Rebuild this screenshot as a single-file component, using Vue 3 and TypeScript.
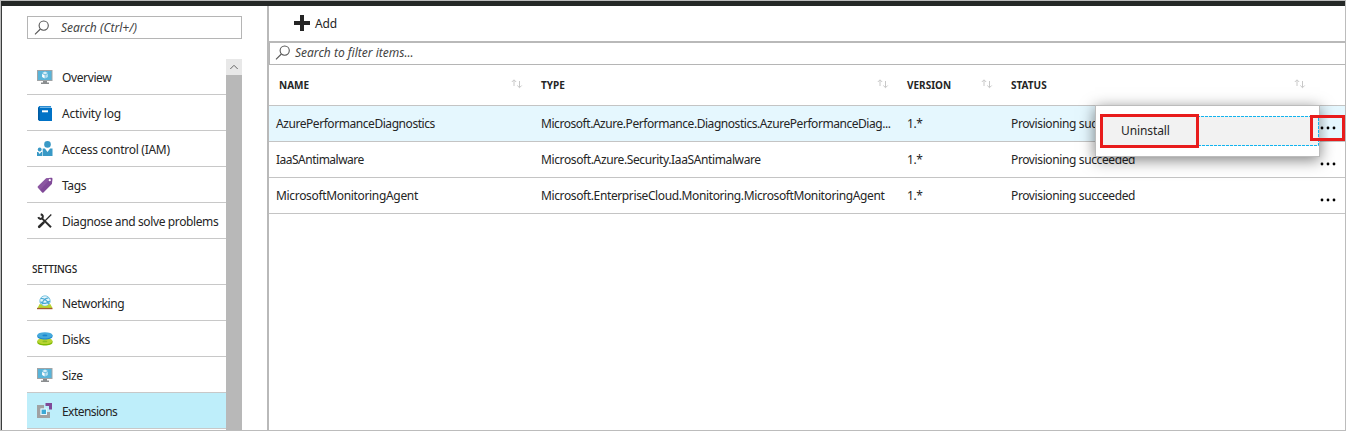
<script setup lang="ts">
interface NavItem {
  label: string
  icon: string
  spacing?: string
}
interface Extension {
  name: string
  type: string
  version: string
  status: string
  spacing: string
}

const general: NavItem[] = [
  { label: 'Overview', icon: 'monitor' },
  { label: 'Activity log', icon: 'book', spacing: '-0.2px' },
  { label: 'Access control (IAM)', icon: 'people', spacing: '-0.28px' },
  { label: 'Tags', icon: 'tag' },
  { label: 'Diagnose and solve problems', icon: 'tools' },
]
const settings: NavItem[] = [
  { label: 'Networking', icon: 'network' },
  { label: 'Disks', icon: 'disks' },
  { label: 'Size', icon: 'monitor' },
  { label: 'Extensions', icon: 'extensions', spacing: '-0.55px' },
]
const sections = [
  { title: '', items: general },
  { title: 'SETTINGS', items: settings },
]
const columns = ['NAME', 'TYPE', 'VERSION', 'STATUS']
const rows: Extension[] = [
  {
    name: 'AzurePerformanceDiagnostics',
    type: 'Microsoft.Azure.Performance.Diagnostics.AzurePerformanceDiag...',
    version: '1.*',
    status: 'Provisioning succeeded',
    spacing: '-0.44px',
  },
  {
    name: 'IaaSAntimalware',
    type: 'Microsoft.Azure.Security.IaaSAntimalware',
    version: '1.*',
    status: 'Provisioning succeeded',
    spacing: '-0.5px',
  },
  {
    name: 'MicrosoftMonitoringAgent',
    type: 'Microsoft.EnterpriseCloud.Monitoring.MicrosoftMonitoringAgent',
    version: '1.*',
    status: 'Provisioning succeeded',
    spacing: '-0.33px',
  },
]
</script>

<template>
  <div class="portal">
    <aside class="sidebar">
      <div class="search side-search">
        <svg class="lens" width="16" height="16" viewBox="0 0 16 16"><circle cx="9.7" cy="5.6" r="4.6" /><path d="M6.4 9 1 14.4" /></svg>
        <span>Search (Ctrl+/)</span>
      </div>
      <div class="nav-area">
        <nav>
          <section v-for="s in sections" :key="s.title">
            <h2 v-if="s.title">{{ s.title }}</h2>
            <div v-for="item in s.items" :key="item.label" class="nav-item" :class="{ active: item.label === 'Extensions' }">
              <svg class="icon" width="16" height="16" viewBox="0 0 16 16">
                <g v-if="item.icon === 'monitor'">
                  <path fill="#a0a4a6" d="M0 1h15.500v11H0z" />
                  <path fill="#59b4d9" d="M1 2h13.500v9H1z" />
                  <path fill="#8a8d8f" d="M6 12h4v1.600h2v1.300H4v-1.300h2z" />
                  <path fill="#d5edf7" d="m8 2.600 2.800 1.500L8 5.600 5.200 4.100z" />
                  <path fill="#fff" d="m5.100 4.800 2.600 1.400v3.300L5.100 8z" />
                  <path fill="#b5def0" d="m10.900 4.800-2.600 1.400v3.300L10.900 8z" />
                </g>
                <g v-else-if="item.icon === 'book'">
                  <path fill="#0072c6" d="M2.400 1H14v1H3v1h12v13H2.300L1 14.600V2.400z" />
                  <path fill="#6fb5e4" d="M3 1.600h11.200V3H3z" />
                  <path fill="#005ba1" d="M1 2.500 2.600 4v12L1 14.600z" />
                  <path fill="#fff" d="M5 5.300h6v2H5z" />
                </g>
                <g v-else-if="item.icon === 'people'" fill="#3999c6">
                  <circle cx="10.5" cy="3.400" r="3.300" />
                  <path d="M5.700 15V7.500h2.200l2.600 3.600 2.600-3.600h2.400V15z" />
                  <circle cx="2.700" cy="8.500" r="1.900" />
                  <path d="M0 15v-4h1.200l1.500 2 1.500-2h1V15z" />
                </g>
                <g v-else-if="item.icon === 'tag'">
                  <path fill="#804998" d="M9.200 1.200 14.400.7q1.200 0 1.100 1.200l-.6 5.200-8.400 8.300q-.7.6-1.400 0L1 10.800q-.8-.8 0-1.500z" />
                  <path fill="#9a6bae" d="M9.200 1.200 14.400.7 3.200 13 1 10.800q-.8-.8 0-1.500z" opacity=".4" />
                  <circle cx="12.8" cy="3.2" r="1.1" fill="#fff" />
                </g>
                <g v-else-if="item.icon === 'tools'" fill="none" stroke="#2b2b2b">
                  <path stroke-width="2" d="m5 5.400 9 8.800" />
                  <path stroke-width="2.6" stroke-linecap="round" d="m2.200 13.800 4.300-4.200" />
                  <path stroke-width="1.3" d="m6.500 9.400 7.800-7.900" />
                  <path stroke-width="2" d="M3.700 1.300c2.200.6 2.800 2.400 1.500 3.800S2 5.900 1.300 4.100" />
                </g>
                <g v-else-if="item.icon === 'network'">
                  <circle cx="8" cy="6" r="5.2" fill="#e6f5fb" stroke="#7cc6e3" />
                  <path fill="none" stroke="#49a9d3" stroke-width="1.2" d="M4 3.400c3 0 7 2.200 7.600 6M5 9.500c.2-3 2.600-6.400 6.600-6.600M3.400 6.800c3 2.500 7 1.800 9.400-.8" />
                  <path fill="#b8d432" d="M2.700 9Q5 9 5.500 10.500q2.500 1 5 0Q11 9 13.300 9l2.200 4H.5z" />
                  <path fill="#a4582c" d="M0 12.900h15.500v1.300H0z" />
                </g>
                <g v-else-if="item.icon === 'disks'">
                  <path fill="#7fba00" d="M.3 10v1.500C.3 13.300 4 14.600 7.900 14.600s7.600-1.300 7.600-3.100V10z" />
                  <ellipse cx="7.900" cy="10" rx="7.600" ry="3.100" fill="#b8d432" />
                  <ellipse cx="7.900" cy="10.400" rx="2.500" ry=".9" fill="#8cc020" />
                  <path fill="#1b85cc" d="M.3 4.300v1.200C.3 7.300 4 8.500 7.900 8.500s7.600-1.200 7.600-3V4.300z" />
                  <ellipse cx="7.900" cy="4.300" rx="7.600" ry="3.100" fill="#45a9dc" />
                  <ellipse cx="7.900" cy="4.400" rx="2.500" ry=".9" fill="#1b85cc" />
                </g>
                <g v-else>
                  <path fill="#a0a1a2" d="M0 2h7v3.500H3.500v6.500h6.500V9h3v6H0z" />
                  <path fill="#e8f7fc" d="M3.500 5.500H10V12H3.500z" />
                  <path fill="#3ba9d6" d="M4.600 6.600H9v4.400H4.600z" />
                  <path fill="#804998" d="M8.500 0H15v6.500h-3V3H8.500z" />
                </g>
              </svg>
              <span :style="{ letterSpacing: item.spacing }">{{ item.label }}</span>
            </div>
          </section>
        </nav>
        <div class="scrollbar">
          <svg width="16" height="16" viewBox="0 0 16 16"><path d="m4.300 10 3.700-3.700L11.700 10" /></svg>
        </div>
      </div>
    </aside>

    <main>
      <div class="toolbar">
        <svg width="16" height="16" viewBox="0 0 16 16"><path fill="#252525" d="M6 0h4v6h6v4h-6v6H6v-6H0V6h6z" /></svg>
        <span>Add</span>
      </div>
      <div class="search filter">
        <svg class="lens" width="16" height="16" viewBox="0 0 16 16"><circle cx="9.7" cy="5.6" r="4.6" /><path d="M6.400 9 1 14.400" /></svg>
        <span>Search to filter items...</span>
      </div>
      <div class="grid head">
        <div v-for="c in columns" :key="c" class="th">
          <span>{{ c }}</span>
          <svg width="12" height="10" viewBox="0 0 12 10"><path d="M3 7V1M.8 3 3 .8 5.200 3M8.500 2v6.500M6.300 6.500l2.200 2.200 2.200-2.200" /></svg>
        </div>
      </div>
      <div v-for="(r, i) in rows" :key="r.name" class="grid row" :class="{ selected: i === 0 }">
        <span class="c-name" :style="{ letterSpacing: r.spacing }">{{ r.name }}</span>
        <span :class="{ clipped: i === 0 }">{{ r.type }}</span>
        <span>{{ r.version }}</span>
        <span>{{ r.status }}</span>
        <svg class="more" width="16" height="4" viewBox="0 0 16 4"><circle cx="2" cy="2" r="1.400" /><circle cx="8" cy="2" r="1.400" /><circle cx="14" cy="2" r="1.400" /></svg>
      </div>
    </main>

    <div class="menu">
      <div class="menu-item">
        <span>Uninstall</span>
        <svg class="focus" width="218" height="30" viewBox="0 0 218 30"><path d="M0 .5h217.500v29H0" /></svg>
      </div>
    </div>
    <div class="mark mark-item"></div>
    <div class="mark mark-more">
      <svg class="edge" width="1" height="20" viewBox="0 0 1 20"><path d="M.5 0v20" /></svg>
      <svg width="16" height="4" viewBox="0 0 16 4"><circle cx="2" cy="2" r="1.400" /><circle cx="8" cy="2" r="1.400" /><circle cx="14" cy="2" r="1.400" /></svg>
    </div>
  </div>
</template>

<style>
body {
  margin: 0;
  overflow: hidden;
}
</style>

<style scoped>
* {
  box-sizing: border-box;
}
svg {
  flex: none;
}
.portal {
  position: relative;
  display: flex;
  width: 1346px;
  height: 431px;
  overflow: hidden;
  border: 1px solid #bcbcbc;
  background: linear-gradient(#252827 5px, transparent 5px), linear-gradient(90deg, #3a3c3c 1px, #fff 1px);
  color: #252525;
  font-family: 'Noto Sans', 'Open Sans', sans-serif;
  font-size: 12px;
  line-height: 16px;
  white-space: nowrap;
}
.sidebar {
  width: 266px;
  padding: 15px 0 0 26px;
}
.search {
  display: flex;
  align-items: center;
  font-style: italic;
  color: #444;
  border: 1px solid #b5b5b5;
}
.lens {
  fill: none;
  stroke: #555;
  stroke-width: 1.1;
}
.side-search {
  width: 215px;
  height: 23px;
  padding-left: 6px;
  gap: 11px;
}
.nav-area {
  display: flex;
  width: 215px;
  height: 371px;
  margin-top: 20px;
}
nav {
  width: 199px;
}
.nav-item {
  display: flex;
  align-items: center;
  height: 36px;
  padding-left: 10px;
  gap: 9px;
  border-bottom: 1px solid #c8c8c8;
  letter-spacing: -0.38px;
}
.nav-item span {
  padding-top: 2px;
}
.active {
  background: #beeefa;
}
h2 {
  height: 46px;
  margin: 0;
  padding: 22px 0 0 5px;
  border-bottom: 1px solid #c8c8c8;
  font-size: 10px;
  font-weight: 500;
  line-height: 16px;
  letter-spacing: -0.2px;
}
.scrollbar {
  width: 16px;
  height: 371px;
  background: linear-gradient(#e8e8e8 16px, #b8b8b8 16px);
}
.scrollbar path {
  fill: none;
  stroke: #666;
}
main {
  width: 1078px;
  height: 424px;
  margin-top: 5px;
  border-left: 2px solid #b9b9b9;
}
.toolbar {
  display: flex;
  align-items: center;
  height: 37px;
  padding: 0 0 1px 25px;
  gap: 5px;
  border-bottom: 2px solid #b9b9b9;
}
.toolbar span {
  padding-top: 1px;
  letter-spacing: -0.1px;
}
.filter {
  height: 22px;
  padding: 0 0 1px 5px;
  gap: 4px;
  border-width: 0 0 1px 1px;
}
.grid {
  display: grid;
  grid-template-columns: 272px 366px 104px 310px 1fr;
  height: 36px;
  align-items: center;
  border-bottom: 1px solid #c4c4c4;
}
.head {
  height: 41px;
  font-size: 10px;
  font-weight: 700;
}
.th {
  display: flex;
  justify-content: space-between;
  align-items: center;
  padding-right: 18px;
}
.th:nth-child(4) {
  padding-right: 15px;
}
.th:first-child {
  padding-left: 10px;
}
.th svg {
  fill: none;
  stroke: #c8c8c8;
  margin-bottom: 3px;
}
.row {
  letter-spacing: -0.38px;
}
.selected {
  background: #e5f7fe;
}
.clipped {
  letter-spacing: -0.45px;
}
.c-name {
  padding-left: 7px;
}
.more {
  margin: 9px 0 0 -1px;
}
.menu {
  position: absolute;
  left: 1094px;
  top: 104px;
  width: 225px;
  height: 52px;
  padding: 10px 0 0 5px;
  border: 1px solid #bcbcbc;
  background: #fff;
  box-shadow: 0 3px 14px rgba(0, 0, 0, 0.5);
}
.menu-item {
  position: relative;
  height: 30px;
  padding-left: 20px;
  background: #f2f2f2;
  line-height: 30px;
  letter-spacing: -0.1px;
}
.focus {
  position: absolute;
  top: 0;
  left: 0;
}
.focus path,
.edge path {
  fill: none;
  stroke: #12b4ef;
  stroke-dasharray: 3 1;
}
.mark {
  position: absolute;
  border: 3px solid #e81c1c;
}
.mark-item {
  left: 1099px;
  top: 113px;
  width: 99px;
  height: 34px;
}
.mark-more {
  left: 1309px;
  top: 114px;
  width: 35px;
  height: 26px;
  display: flex;
  align-items: center;
  padding-left: 5px;
  gap: 1px;
  background: linear-gradient(90deg, #f2f2f2 5px, #b9c5ca 6px, #e5f7fe 16px);
}
</style>
